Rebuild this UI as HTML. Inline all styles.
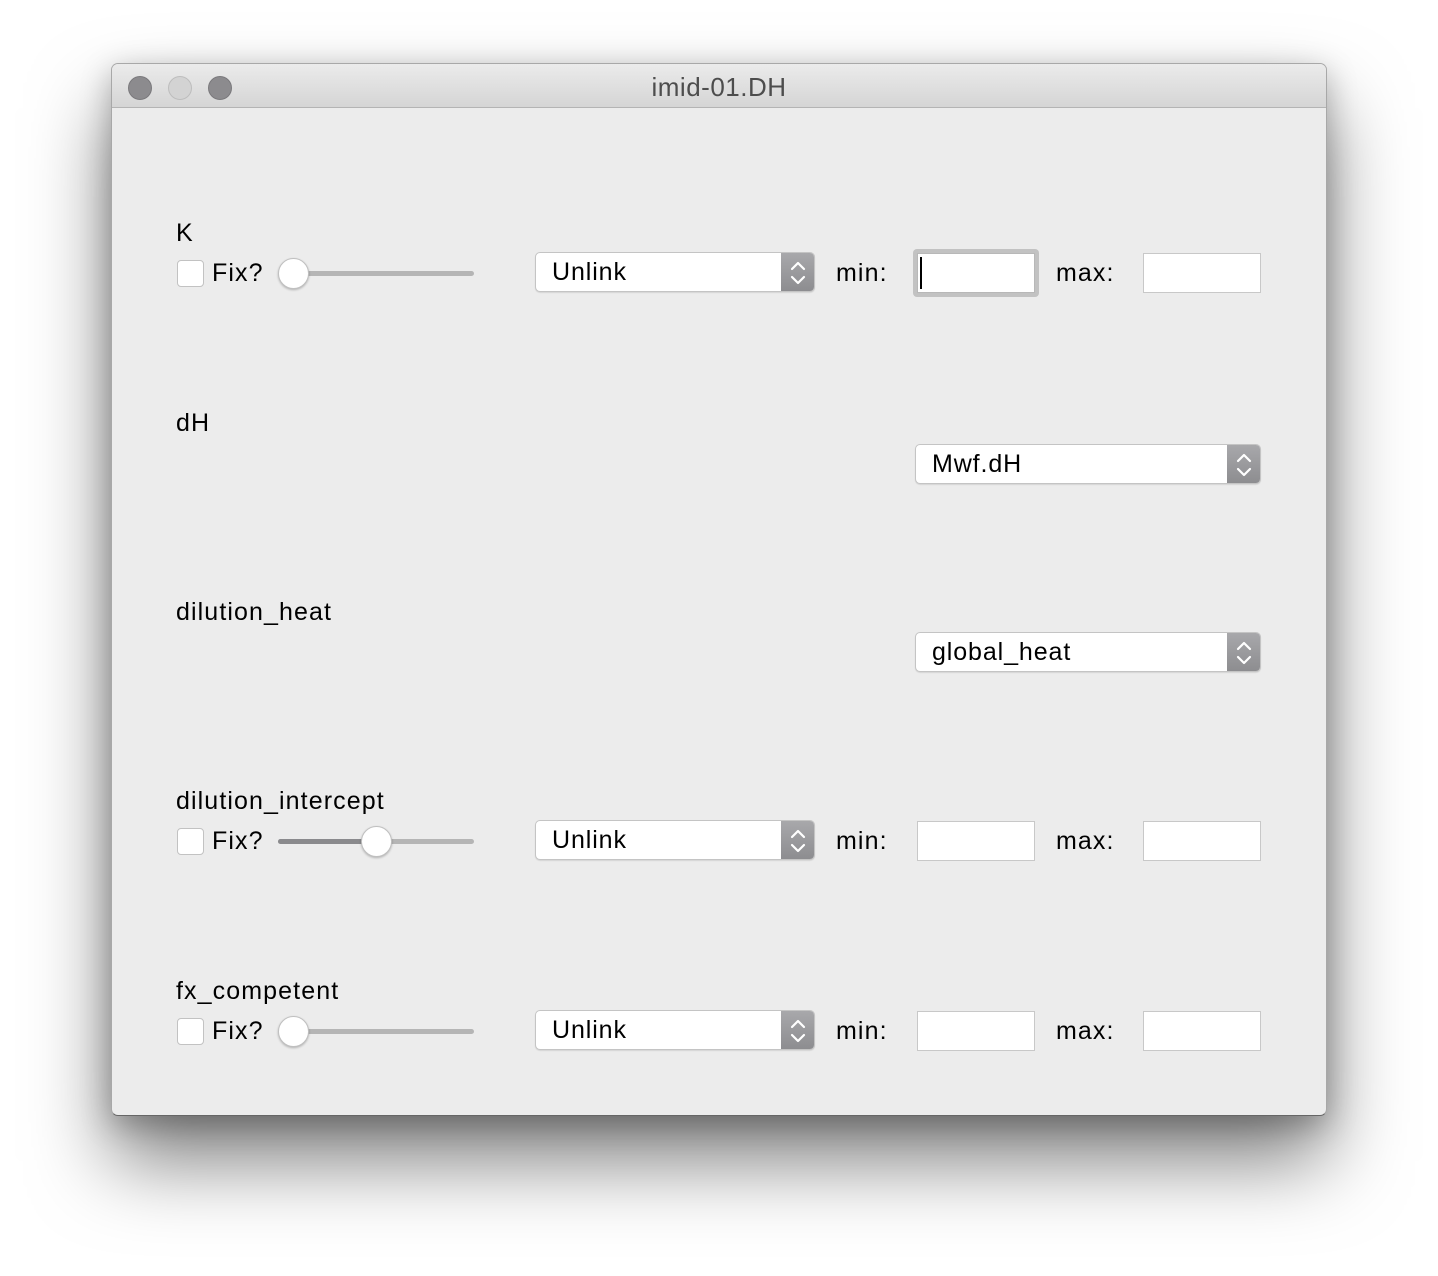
<!DOCTYPE html>
<html><head><meta charset="utf-8"><style>
*{box-sizing:border-box;margin:0;padding:0}
body{width:1438px;height:1276px;background:#fff;position:relative;overflow:hidden;font-family:"Liberation Sans",sans-serif;color:#000}
.win{position:absolute;left:111px;top:63px;width:1216px;height:1053px;background:#ececec;border-radius:7px;border:1px solid #a8a8a8;border-bottom-color:#666;box-shadow:0 45px 80px rgba(0,0,0,0.5),0 8px 30px rgba(0,0,0,0.25);overflow:hidden}
.title{position:absolute;left:0;top:0;right:0;height:44px;background:linear-gradient(#ebebeb,#d5d5d5);border-bottom:1px solid #b4b4b4;text-align:center;font-size:26px;letter-spacing:0.5px;line-height:46px;color:#4d4d4d}
.dot{position:absolute;top:12px;width:24px;height:24px;border-radius:50%;background:#8c8b8e;border:1px solid #7a797c}
.a{position:absolute}
.lbl{position:absolute;font-size:25px;letter-spacing:1.1px;line-height:28px}
.cb{position:absolute;width:27px;height:27px;background:#fff;border:1px solid #c2c2c2;border-radius:4px}
.track{position:absolute;height:5px;border-radius:3px;background:#b5b5b5}
.knob{position:absolute;width:31px;height:31px;border-radius:50%;background:#fff;border:1px solid #c0c0c0;box-shadow:0 1px 2px rgba(0,0,0,0.25)}
.pop{position:absolute;height:40px;background:#fff;border:1px solid #c4c4c4;border-radius:5px;box-shadow:0 1px 1px rgba(0,0,0,0.1);font-size:25px;letter-spacing:0.9px;line-height:38px;padding-left:16px;overflow:hidden}
.arr{position:absolute;right:0;top:0;width:33px;height:100%;background:linear-gradient(#a8a8ab,#8d8d90)}
.arr svg{position:absolute;left:8px;top:6px}
.fld{position:absolute;width:118px;height:40px;background:#fff;border:1px solid #c8c8c8}
</style></head><body>
<div class="win">
 <div class="title">imid-01.DH</div>
 <div class="dot" style="left:16px"></div>
 <div class="dot" style="left:56px;background:#d3d3d3;border-color:#bdbdbd"></div>
 <div class="dot" style="left:96px"></div>
</div>
<svg width="0" height="0" style="position:absolute"><defs><g id="ch"><path d="M3 10 L9 4 L15 10 M3 18 L9 24 L15 18" fill="none" stroke="#fff" stroke-width="2.2" stroke-linecap="round" stroke-linejoin="round"/></g></defs></svg>

<div class="lbl" style="left:176px;top:219px">K</div>
<div class="cb" style="left:177px;top:260px"></div>
<div class="lbl" style="left:212px;top:259px">Fix?</div>
<div class="track" style="left:290px;top:271px;width:184px"></div>
<div class="knob" style="left:278px;top:258px"></div>
<div class="pop" style="left:535px;top:252px;width:280px">Unlink<div class="arr"><svg width="18" height="28"><use href="#ch"/></svg></div></div>
<div class="lbl" style="left:836px;top:259px">min:</div>
<div class="a" style="left:913px;top:249px;width:126px;height:48px;border-radius:4px;background:#c2c2c2"></div>
<div class="fld" style="left:917px;top:253px;border-color:#b8b8b8"></div>
<div class="a" style="left:920px;top:257px;width:2px;height:32px;background:#000"></div>
<div class="lbl" style="left:1056px;top:259px">max:</div>
<div class="fld" style="left:1143px;top:253px"></div>

<div class="lbl" style="left:176px;top:409px">dH</div>
<div class="pop" style="left:915px;top:444px;width:346px">Mwf.dH<div class="arr"><svg width="18" height="28"><use href="#ch"/></svg></div></div>

<div class="lbl" style="left:176px;top:598px">dilution_heat</div>
<div class="pop" style="left:915px;top:632px;width:346px">global_heat<div class="arr"><svg width="18" height="28"><use href="#ch"/></svg></div></div>

<div class="lbl" style="left:176px;top:787px">dilution_intercept</div>
<div class="cb" style="left:177px;top:828px"></div>
<div class="lbl" style="left:212px;top:827px">Fix?</div>
<div class="track" style="left:278px;top:839px;width:196px"></div>
<div class="track" style="left:278px;top:839px;width:98px;background:#8a8a8d"></div>
<div class="knob" style="left:361px;top:826px"></div>
<div class="pop" style="left:535px;top:820px;width:280px">Unlink<div class="arr"><svg width="18" height="28"><use href="#ch"/></svg></div></div>
<div class="lbl" style="left:836px;top:827px">min:</div>
<div class="fld" style="left:917px;top:821px"></div>
<div class="lbl" style="left:1056px;top:827px">max:</div>
<div class="fld" style="left:1143px;top:821px"></div>

<div class="lbl" style="left:176px;top:977px">fx_competent</div>
<div class="cb" style="left:177px;top:1018px"></div>
<div class="lbl" style="left:212px;top:1017px">Fix?</div>
<div class="track" style="left:290px;top:1029px;width:184px"></div>
<div class="knob" style="left:278px;top:1016px"></div>
<div class="pop" style="left:535px;top:1010px;width:280px">Unlink<div class="arr"><svg width="18" height="28"><use href="#ch"/></svg></div></div>
<div class="lbl" style="left:836px;top:1017px">min:</div>
<div class="fld" style="left:917px;top:1011px"></div>
<div class="lbl" style="left:1056px;top:1017px">max:</div>
<div class="fld" style="left:1143px;top:1011px"></div>
</body></html>
